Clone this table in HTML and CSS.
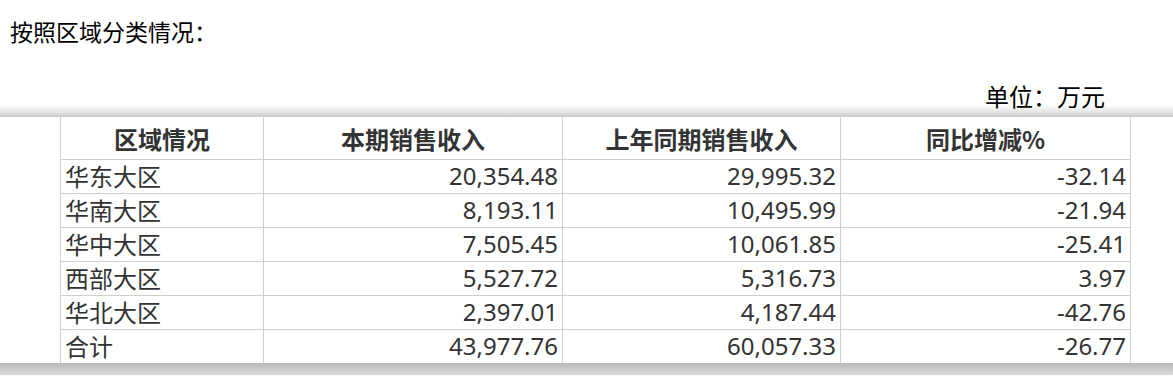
FILE: index.html
```html
<!DOCTYPE html>
<html lang="zh">
<head>
<meta charset="utf-8">
<link rel="stylesheet" href="styles.css">
</head>
<body>
<div class="title">按照区域分类情况：</div>
<div class="unit">单位：万元</div>
<div class="shade-top"></div>
<div class="table-wrap">
  <table class="data">
    <colgroup>
      <col class="c1"><col class="c2"><col class="c3"><col class="c4">
    </colgroup>
    <thead>
      <tr><th>区域情况</th><th>本期销售收入</th><th>上年同期销售收入</th><th>同比增减%</th></tr>
    </thead>
    <tbody>
      <tr><td class="name">华东大区</td><td>20,354.48</td><td>29,995.32</td><td>-32.14</td></tr>
      <tr><td class="name">华南大区</td><td>8,193.11</td><td>10,495.99</td><td>-21.94</td></tr>
      <tr><td class="name">华中大区</td><td>7,505.45</td><td>10,061.85</td><td>-25.41</td></tr>
      <tr><td class="name">西部大区</td><td>5,527.72</td><td>5,316.73</td><td>3.97</td></tr>
      <tr><td class="name">华北大区</td><td>2,397.01</td><td>4,187.44</td><td>-42.76</td></tr>
      <tr><td class="name">合计</td><td>43,977.76</td><td>60,057.33</td><td>-26.77</td></tr>
    </tbody>
  </table>
</div>
<div class="shade-bottom"></div>
</body>
</html>
```
FILE: styles.css
```css
html, body {
  margin: 0;
  padding: 0;
  background: #fff;
}
body {
  font-family: "Noto Sans", "Noto Sans CJK SC", sans-serif;
  color: #000;
}
.title {
  font-family: "Noto Sans CJK SC", sans-serif;
  font-size: 23px;
  line-height: 30px;
  padding: 16px 0 0 10px;
  height: 47px;
  box-sizing: border-box;
}
.unit {
  font-family: "Noto Sans CJK SC", sans-serif;
  font-size: 24px;
  line-height: 30px;
  text-align: right;
  padding: 34px 68px 0 0;
  height: 58px;
  box-sizing: border-box;
}
.shade-top {
  height: 12px;
  background: linear-gradient(to bottom, #ffffff 0%, #e4e4e4 60%, #c8c8c8 100%);
}
.table-wrap {
  padding-left: 60px;
  background: #fff;
}
.data {
  border-collapse: collapse;
  width: 1070px;
  table-layout: fixed;
  color: #333;
  font-size: 24px;
}
.c1 { width: 203px; }
.c2 { width: 299px; }
.c3 { width: 278px; }
.c4 { width: 290px; }
.data th, .data td {
  border: 1px solid #cfcfcf;
  padding: 0 4px;
  white-space: nowrap;
}
.data tr:first-child th { border-top: none; }
.data th {
  font-family: "Noto Sans CJK SC", sans-serif;
  font-weight: bold;
  height: 42px;
  text-align: center;
  line-height: 30px;
  padding-top: 2px;
  box-sizing: border-box;
}
.data td {
  height: 34px;
  line-height: 32px;
  text-align: right;
  box-sizing: border-box;
}
.data td.name {
  text-align: left;
  font-family: "Noto Sans CJK SC", sans-serif;
}
.data tbody tr:last-child td { border-bottom: none; }
.shade-bottom {
  height: 12px;
  background: linear-gradient(to bottom, #b8b8b8 0%, #cfcfcf 60%, #dcdcdc 100%);
}
```
